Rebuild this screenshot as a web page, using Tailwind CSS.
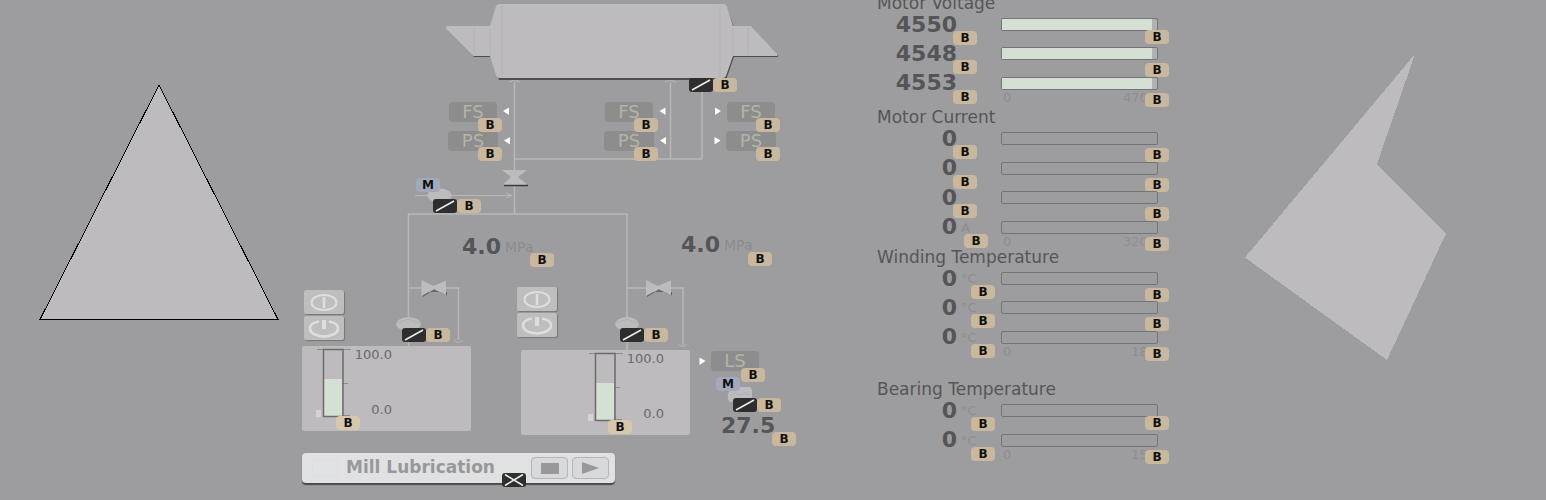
<!DOCTYPE html>
<html lang="en">
<head>
<meta charset="utf-8">
<meta name="viewport" content="width=device-width, initial-scale=1">
<title>Mill Lubrication</title>
<script src="https://cdn.jsdelivr.net/npm/@tailwindcss/browser@4"></script>
</head>
<body class="bg-[#9d9d9f] font-['DejaVu_Sans',sans-serif] text-[#555557]">
<svg class="hidden" aria-hidden="true">
  <symbol id="slash" viewBox="0 0 24 14"><rect width="24" height="14" rx="3" fill="#2e2e2f"/><path d="M3 12 21 2" stroke="#eeeeec" stroke-width="1.500"/></symbol>
  <symbol id="cross" viewBox="0 0 24 14"><rect width="24" height="14" rx="3" fill="#2e2f2f"/><path d="M3 1.500 21 12.500M21 1.500 3 12.500" stroke="#eeeeec" stroke-width="1.500"/></symbol>
  <symbol id="on" viewBox="0 0 40 24"><ellipse cx="20" cy="12.500" rx="12.500" ry="7.500" fill="none" stroke="#dededf" stroke-width="2"/><path d="M20 7v11" stroke="#dededf" stroke-width="2.500"/></symbol>
  <symbol id="power" viewBox="0 0 40 24"><path d="M15 5.500C9 6.500 6 9.500 6 12.500 6 17 12 20.500 20 20.500S34 17 34 12.500C34 9.500 31 6.500 25 5.500" fill="none" stroke="#dededf" stroke-width="2.500"/><path d="M20 4v9" stroke="#dededf" stroke-width="4"/></symbol>
</svg>

<main class="grid min-h-screen grid-cols-[300fr_500px_370px_376fr] overflow-hidden">

  <section class="flex items-start justify-center pt-[84px] pl-[18px]" aria-label="Triangle">
    <svg class="w-[240px]" viewBox="0 0 240 237" shape-rendering="crispEdges"><path d="M120 1 1 235.500H239Z" fill="#bdbbbe" stroke="#000"/></svg>
  </section>

  <!-- Process diagram: nodes on a free canvas -->
  <section class="relative h-[500px]" aria-label="Lubrication diagram">
    <svg class="absolute inset-0 size-full" viewBox="300 0 500 500">
      <g fill="none" stroke="#b8b7ba" stroke-width="1.500">
        <path d="M514.500 82V214M670.500 82V159M702 92V159M514 159H702M408.500 346V214H627V350M408 288H458.500V340M627 288H683V345"/>
        <path d="M415 195.500H512M506 193 512 195.500 506 198M509 82 514.500 80 520 82M665 82 670.500 80 676 82" stroke-width="1"/>
        <path d="M454 340Q458.500 345 463 340M679 344Q683 349 687 344" stroke="#adacae"/>
      </g>
      <path d="M498 5H725L733 26H751L777 55V56H733L725 79H498L490 56H473L446 29V26H490Z" fill="#4f4e51" transform="translate(1 1)"/>
      <path d="M499 4H724Q726 4 727 7L733 26H750Q752 26 753 28L777 54V56H733L726 76Q725 78 723 78H500Q497 78 496 75L490 56H473L446 29V26H490L496 6Q497 4 499 4Z" fill="#bdbbbe"/>
      <path d="M502 6V77M720 6V77M474 28V55M490 28V55M733 28V55M748 28V55" stroke="#b2b1b4"/>
      <path d="M504 185.500H528" stroke="#39393b" stroke-width="1.500"/>
      <path d="M502 170H527L518 177 527 184.500H503L511 177Z" fill="#bdbbbe"/>
      <g fill="#656466"><path d="M423 297 434 289.500 447 295.500V292H423ZM647 297 659 289.500 672 295.500V292H647Z"/></g>
      <g fill="#bdbbbe">
        <path d="M421.500 280 433.500 286 446 280.500V295L434 289 421.500 296ZM646 280 658 286 671 280.500V295L658.500 289 646 296Z"/>
        <path d="M396 324Q397 318 408.500 317 420 318 421 324 420 331 408 331 397 330 396 324ZM615 324Q616 318 627 317 638 318 639 324 638 331 627 331 616 330 615 324Z"/>
        <ellipse cx="439.500" cy="195.500" rx="12" ry="7"/>
        <path d="M731 387H750Q752 388 752 392V399Q751 402 742 402H730Q727 400 728 394Z"/>
      </g>
      <path d="M398 323 408 319 419 323M617 323 627 319 637 323M731 395 736 393 740 395 745 393 750 395" fill="none" stroke="#b1b0b3"/>
      <g fill="#fff">
        <path d="M503 111 509 107.500V115ZM504 140.500 510 137V144.500ZM659.500 111 665.500 107.500V115ZM660 140.500 666 137V144.500Z"/>
        <path d="M721 111 715 107.500V115ZM720.500 140.500 714.500 137V144.500ZM705.500 361 699.500 357.500V365Z"/>
      </g>
    </svg>

    <!-- Flow and pressure switches -->
    <div class="text-lg text-[#b3b4a6]">
      <span class="absolute top-[102px] left-[149px] flex h-5 w-12 items-center justify-center rounded-sm bg-[#8d8d8d]">FS</span>
      <span class="absolute top-[131px] left-[148px] flex h-5 w-[50px] items-center justify-center rounded-sm bg-[#8d8d8d]">PS</span>
      <span class="absolute top-[102px] left-[305px] flex h-5 w-12 items-center justify-center rounded-sm bg-[#8d8d8d]">FS</span>
      <span class="absolute top-[131px] left-[304px] flex h-5 w-[50px] items-center justify-center rounded-sm bg-[#8d8d8d]">PS</span>
      <span class="absolute top-[102px] left-[427px] flex h-5 w-12 items-center justify-center rounded-sm bg-[#8d8d8d]">FS</span>
      <span class="absolute top-[131px] left-[426px] flex h-5 w-[50px] items-center justify-center rounded-sm bg-[#8d8d8d]">PS</span>
      <span class="absolute top-[351px] left-[411px] flex h-5 w-12 items-center justify-center rounded-sm bg-[#8d8d8d]">LS</span>
    </div>

    <!-- Measured values -->
    <div class="absolute top-[237px] left-[162px] flex items-center gap-1 leading-5"><b class="text-[22px] leading-5">4.0</b><span class="text-sm leading-5 text-[#8b8b8d]">MPa</span></div>
    <div class="absolute top-[235px] left-[381px] flex items-center gap-1 leading-5"><b class="text-[22px] leading-5">4.0</b><span class="text-sm leading-5 text-[#8b8b8d]">MPa</span></div>
    <b class="absolute top-[416px] left-[421px] text-[22px] leading-5">27.5</b>

    <!-- Pump commands -->
    <div class="absolute top-[290px] left-[4px] flex flex-col gap-0.5">
      <button aria-label="On" class="h-6 w-10 rounded-xs bg-[#bebebf] shadow-[1px_1px_1px_#777]"><svg class="size-full"><use href="#on"/></svg></button>
      <button aria-label="Off" class="h-6 w-10 rounded-xs bg-[#bebebf] shadow-[1px_1px_1px_#777]"><svg class="size-full"><use href="#power"/></svg></button>
    </div>
    <div class="absolute top-[287px] left-[217px] flex flex-col gap-0.5">
      <button aria-label="On" class="h-6 w-10 rounded-xs bg-[#bebebf] shadow-[1px_1px_1px_#777]"><svg class="size-full"><use href="#on"/></svg></button>
      <button aria-label="Off" class="h-6 w-10 rounded-xs bg-[#bebebf] shadow-[1px_1px_1px_#777]"><svg class="size-full"><use href="#power"/></svg></button>
    </div>

    <!-- Tanks -->
    <div class="absolute top-[346px] left-[2px] flex h-[85px] w-[169px] rounded-xs bg-[#bdbbbe] text-[13px] leading-[18px] text-[#69686b]">
      <svg class="h-[85px] w-[50px] shrink-0" viewBox="0 0 50 85" role="img" aria-label="Level 56"><path d="M14 64H19V71H14Z" fill="#d5d5d6"/><path d="M22 33H40V70H22Z" fill="#d5e0d5"/><path d="M15 3.500H49M40 37.500H46M40 69.500H48" stroke="#8b8a8d"/><path d="M21.500 3.500H41V70.500H21.500Z" fill="none" stroke="#6b6a6d" stroke-width="1.500"/></svg>
      <div class="flex w-10 flex-col items-end justify-between pb-3 whitespace-nowrap"><span>100.0</span><span>0.0</span></div>
    </div>
    <div class="absolute top-[350px] left-[221px] flex h-[85px] w-[169px] rounded-xs bg-[#bdbbbe] pl-[53px] text-[13px] leading-[18px] text-[#69686b]">
      <svg class="h-[85px] w-[50px] shrink-0" viewBox="0 0 50 85" role="img" aria-label="Level 56"><path d="M14 64H19V71H14Z" fill="#d5d5d6"/><path d="M22 33H40V70H22Z" fill="#d5e0d5"/><path d="M15 3.500H49M40 37.500H46M40 69.500H48" stroke="#8b8a8d"/><path d="M21.500 3.500H41V70.500H21.500Z" fill="none" stroke="#6b6a6d" stroke-width="1.500"/></svg>
      <div class="flex w-10 flex-col items-end justify-between pb-3 whitespace-nowrap"><span>100.0</span><span>0.0</span></div>
    </div>

    <!-- Group control -->
    <div class="absolute top-[453px] left-[2px] flex h-[30px] w-[313px] items-center gap-1 rounded-sm bg-[#e0e1e3] pr-[6px] pl-[10px] shadow-[0_2px_1px_#4b4b4d]">
      <span class="h-4 w-[26px] border border-[#dcddde]"></span>
      <h1 class="mr-auto ml-1 text-[17px] font-bold whitespace-nowrap text-[#98989a]">Mill Lubrication</h1>
      <button aria-label="Stop" class="flex h-[22px] w-[37px] items-center justify-center rounded-sm border border-[#b5b5b7] bg-[#d8d9da]"><svg class="h-[11px] w-[18px]"><rect width="18" height="11" fill="#98989a"/></svg></button>
      <button aria-label="Start" class="flex h-[22px] w-[37px] items-center justify-center rounded-sm border border-[#b5b5b7] bg-[#d8d9da]"><svg class="h-3 w-[17px]"><path d="M0 0 17 6 0 12Z" fill="#98989a"/></svg></button>
    </div>

    <!-- Status badges -->
    <svg class="absolute top-[78px] left-[389px] h-[14px] w-6"><use href="#slash"/></svg>
    <svg class="absolute top-[199px] left-[133px] h-[14px] w-6"><use href="#slash"/></svg>
    <svg class="absolute top-[328px] left-[102px] h-[14px] w-6"><use href="#slash"/></svg>
    <svg class="absolute top-[328px] left-[320px] h-[14px] w-6"><use href="#slash"/></svg>
    <svg class="absolute top-[398px] left-[433px] h-[14px] w-6"><use href="#slash"/></svg>
    <svg class="absolute top-[473px] left-[202px] h-[14px] w-6"><use href="#cross"/></svg>
    <div class="text-center text-xs leading-[14px] font-bold text-[#111]">
      <span class="absolute top-[178px] left-[116px] h-[14px] w-6 rounded-sm bg-[#a3a9bd]">M</span>
      <span class="absolute top-[377px] left-[416px] h-[14px] w-6 rounded-sm bg-[#a3a9bd]">M</span>
      <span class="absolute top-[78px] left-[413px] h-[14px] w-6 rounded-sm bg-[#c9b89d]">B</span>
      <span class="absolute top-[118px] left-[178px] h-[14px] w-6 rounded-sm bg-[#c9b89d]">B</span>
      <span class="absolute top-[147px] left-[178px] h-[14px] w-6 rounded-sm bg-[#c9b89d]">B</span>
      <span class="absolute top-[118px] left-[334px] h-[14px] w-6 rounded-sm bg-[#c9b89d]">B</span>
      <span class="absolute top-[147px] left-[334px] h-[14px] w-6 rounded-sm bg-[#c9b89d]">B</span>
      <span class="absolute top-[118px] left-[456px] h-[14px] w-6 rounded-sm bg-[#c9b89d]">B</span>
      <span class="absolute top-[147px] left-[456px] h-[14px] w-6 rounded-sm bg-[#c9b89d]">B</span>
      <span class="absolute top-[199px] left-[157px] h-[14px] w-6 rounded-sm bg-[#c9b89d]">B</span>
      <span class="absolute top-[253px] left-[230px] h-[14px] w-6 rounded-sm bg-[#c9b89d]">B</span>
      <span class="absolute top-[252px] left-[448px] h-[14px] w-6 rounded-sm bg-[#c9b89d]">B</span>
      <span class="absolute top-[328px] left-[126px] h-[14px] w-6 rounded-sm bg-[#c9b89d]">B</span>
      <span class="absolute top-[328px] left-[344px] h-[14px] w-6 rounded-sm bg-[#c9b89d]">B</span>
      <span class="absolute top-[416px] left-[36px] h-[14px] w-6 rounded-sm bg-[#d7c7ac]">B</span>
      <span class="absolute top-[420px] left-[308px] h-[14px] w-6 rounded-sm bg-[#d7c7ac]">B</span>
      <span class="absolute top-[368px] left-[441px] h-[14px] w-6 rounded-sm bg-[#c9b89d]">B</span>
      <span class="absolute top-[398px] left-[457px] h-[14px] w-6 rounded-sm bg-[#c9b89d]">B</span>
      <span class="absolute top-[432px] left-[472px] h-[14px] w-6 rounded-sm bg-[#c9b89d]">B</span>
    </div>
  </section>

  <!-- Motor readings -->
  <section class="-mt-1 pl-[77px] [&_h2]:text-[17px] [&_h2]:leading-[14px] [&_h2]:whitespace-nowrap [&_i]:absolute [&_i]:h-[14px] [&_i]:w-6 [&_i]:rounded-sm [&_i]:bg-[#c9b89d] [&_i]:text-center [&_i]:text-xs [&_i]:leading-[14px] [&_i]:font-bold [&_i]:text-[#111] [&_i]:not-italic [&_li]:relative [&_li]:flex [&_li]:items-center [&_li]:pr-3 [&_li>b]:w-20 [&_li>b]:text-right [&_li>b]:text-[22px] [&_li>b]:leading-5 [&_li>span]:w-11 [&_li>span]:pl-1 [&_li>span]:text-[13px] [&_li>span]:text-[#8e8e90] [&_li>div]:h-[13px] [&_li>div]:flex-1 [&_li>div]:rounded-xs [&_li>div]:border [&_li>div]:border-[#747476] [&_li>p]:absolute [&_li>p]:top-[22px] [&_li>p]:right-3 [&_li>p]:left-[124px] [&_li>p]:flex [&_li>p]:justify-between [&_li>p]:px-0.5 [&_li>p]:text-[13px] [&_li>p]:leading-[14px] [&_li>p]:text-[#8e8e90]">
    <h2>Motor Voltage</h2>
    <ul class="mb-3 grid h-[88px] auto-rows-fr">
      <li><b>4550</b><span></span><div class="bg-[#b1b0b3]"><div class="h-full bg-[#d5e0d5]" style="width:97%"></div></div><i class="top-[21px] left-[76px]">B</i><i class="top-5 right-px">B</i></li>
      <li><b>4548</b><span></span><div class="bg-[#b1b0b3]"><div class="h-full bg-[#d5e0d5]" style="width:97%"></div></div><i class="top-[21px] left-[76px]">B</i><i class="top-6 right-px">B</i></li>
      <li><b>4553</b><span></span><div class="bg-[#b1b0b3]"><div class="h-full bg-[#d5e0d5]" style="width:97%"></div></div><p><span>0</span><span>4700</span></p><i class="top-[21px] left-[76px]">B</i><i class="top-6 right-px">B</i></li>
    </ul>
    <h2>Motor Current</h2>
    <ul class="mb-2 grid h-[118px] auto-rows-fr">
      <li><b>0</b><span></span><div></div><i class="top-[21px] left-[76px]">B</i><i class="top-6 right-px">B</i></li>
      <li><b>0</b><span></span><div></div><i class="top-[21px] left-[76px]">B</i><i class="top-6 right-px">B</i></li>
      <li><b>0</b><span></span><div></div><i class="top-[21px] left-[76px]">B</i><i class="top-6 right-px">B</i></li>
      <li><b>0</b><span>A</span><div></div><p><span>0</span><span>3200</span></p><i class="top-[21px] left-[87px]">B</i><i class="top-6 right-px">B</i></li>
    </ul>
    <h2>Winding Temperature</h2>
    <ul class="mb-[30px] grid h-[88px] auto-rows-fr">
      <li><b>0</b><span>°C</span><div></div><i class="top-[21px] left-[94px]">B</i><i class="top-6 right-px">B</i></li>
      <li><b>0</b><span>°C</span><div></div><i class="top-[21px] left-[94px]">B</i><i class="top-6 right-px">B</i></li>
      <li><b>0</b><span>°C</span><div></div><p><span>0</span><span>180</span></p><i class="top-[21px] left-[94px]">B</i><i class="top-6 right-px">B</i></li>
    </ul>
    <h2>Bearing Temperature</h2>
    <ul class="grid h-[59px] auto-rows-fr">
      <li><b>0</b><span>°C</span><div></div><i class="top-[21px] left-[94px]">B</i><i class="top-5 right-px">B</i></li>
      <li><b>0</b><span>°C</span><div></div><p><span>0</span><span>150</span></p><i class="top-[21px] left-[94px]">B</i><i class="top-6 right-px">B</i></li>
    </ul>
  </section>

  <section class="flex items-start justify-center pt-[54px] pr-6" aria-label="Polygon">
    <svg class="w-[202px]" viewBox="0 0 202 306" shape-rendering="crispEdges"><path d="M170 0 132 110 201 179.500 142 306 0 203.500Z" fill="#bdbbbe"/></svg>
  </section>
</main>
</body>
</html>
